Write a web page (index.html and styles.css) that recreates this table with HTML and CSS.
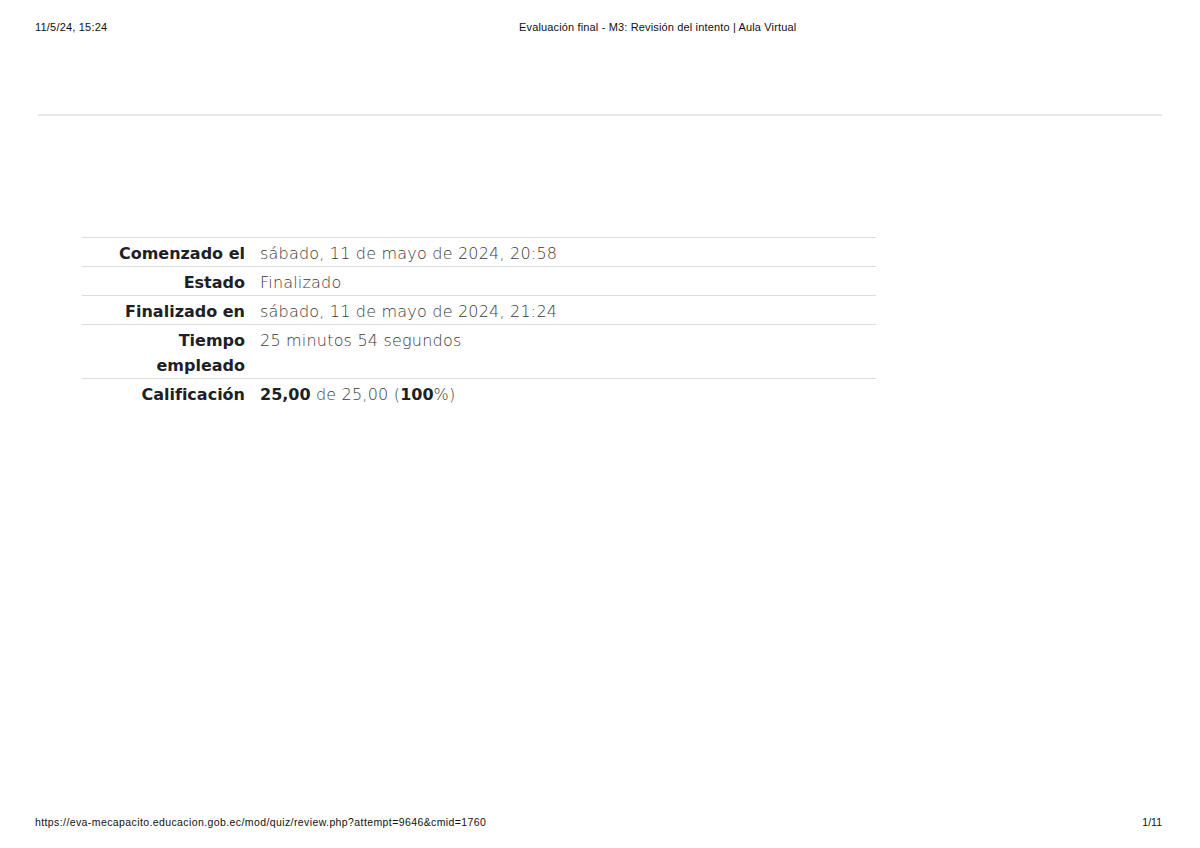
FILE: index.html
```html
<!DOCTYPE html>
<html lang="es">
<head>
<meta charset="utf-8">
<title>Evaluación final - M3: Revisión del intento | Aula Virtual</title>
<link rel="stylesheet" href="styles.css">
</head>
<body>
<div class="page">
  <header class="print-header">
    <span class="date">11/5/24, 15:24</span>
    <span class="title">Evaluación final - M3: Revisión del intento | Aula Virtual</span>
  </header>
  <div class="rule"></div>
  <div class="summary">
    <div class="row">
      <div class="label">Comenzado el</div>
      <div class="value">sábado, 11 de mayo de 2024, 20:58</div>
    </div>
    <div class="row">
      <div class="label">Estado</div>
      <div class="value">Finalizado</div>
    </div>
    <div class="row">
      <div class="label">Finalizado en</div>
      <div class="value">sábado, 11 de mayo de 2024, 21:24</div>
    </div>
    <div class="row">
      <div class="label">Tiempo empleado</div>
      <div class="value">25 minutos 54 segundos</div>
    </div>
    <div class="row last">
      <div class="label">Calificación</div>
      <div class="value"><b>25,00</b> de 25,00 (<b>100</b>%)</div>
    </div>
  </div>
  <footer class="print-footer">
    <span class="url">https://eva-mecapacito.educacion.gob.ec/mod/quiz/review.php?attempt=9646&amp;cmid=1760</span>
    <span class="pages">1/11</span>
  </footer>
</div>
</body>
</html>
```

FILE: styles.css
```css
html, body {
  margin: 0;
  padding: 0;
  background: #fff;
}

.page {
  width: 1200px;
  height: 848px;
  display: flex;
  flex-direction: column;
  box-sizing: border-box;
}

.print-header {
  display: flex;
  padding: 21px 35px 0 35px;
  font-family: "Liberation Sans", Arial, sans-serif;
  font-size: 11px;
  line-height: 13px;
  color: #111;
}

.print-header .date {
  width: 484px;
  flex: none;
  letter-spacing: 0.2px;
}

.print-header .title {
  letter-spacing: 0.15px;
}

.rule {
  margin: 80px 38px 0 38px;
  height: 2px;
  background: #ebe7e7;
}

.summary {
  margin: 121px 0 0 82px;
  width: 794px;
  font-family: "DejaVu Sans", "Liberation Sans", sans-serif;
  font-size: 16px;
  line-height: 25px;
}

.row {
  display: grid;
  grid-template-columns: 171px 1fr;
  border-top: 1px solid #dcdcdc;
  padding: 3px 0 0 0;
}

.label {
  text-align: right;
  font-weight: bold;
  color: #1d2125;
  padding: 0 8px 0 30px;
}

.value {
  padding-left: 7px;
  color: #3a3a3a;
  font-weight: 300;
  letter-spacing: 0.2px;
}

.value b {
  color: #1d2125;
  font-weight: bold;
  letter-spacing: 0;
}

.print-footer {
  margin-top: auto;
  display: flex;
  justify-content: space-between;
  padding: 0 38px 19px 35px;
  font-family: "Liberation Sans", Arial, sans-serif;
  font-size: 10.5px;
  line-height: 13px;
  color: #111;
}

.print-footer .url {
  letter-spacing: 0.4px;
}
```
